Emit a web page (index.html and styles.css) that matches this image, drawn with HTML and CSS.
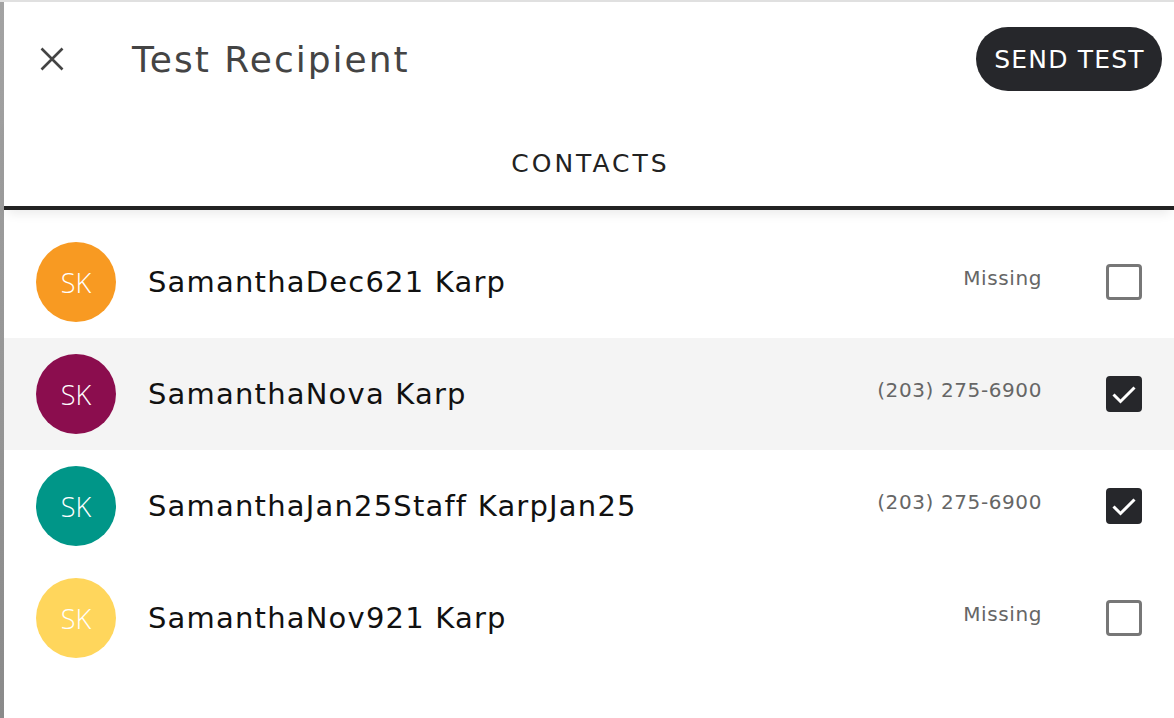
FILE: index.html
```html
<!DOCTYPE html>
<html>
<head>
<meta charset="utf-8">
<link rel="stylesheet" href="styles.css">
</head>
<body>
<div class="dialog">
  <header class="header">
    <button class="close" aria-label="Close">
      <svg width="28" height="28" viewBox="0 0 28 28"><path d="M3.5 3.5 L24.5 24.5 M24.5 3.5 L3.5 24.5" stroke="#444" stroke-width="2.6"/></svg>
    </button>
    <h1 class="title">Test Recipient</h1>
    <button class="send">SEND TEST</button>
  </header>
  <nav class="tabs">
    <div class="tab">CONTACTS</div>
  </nav>
  <ul class="list">
    <li class="row">
      <span class="avatar orange">SK</span>
      <span class="name">SamanthaDec621 Karp</span>
      <span class="meta">Missing</span>
      <span class="check"></span>
    </li>
    <li class="row hover">
      <span class="avatar plum">SK</span>
      <span class="name">SamanthaNova Karp</span>
      <span class="meta">(203) 275-6900</span>
      <span class="check on"><svg width="30" height="30" viewBox="0 0 30 30"><path d="M4.5 15.5 L11.5 22.5 L25.5 8.5" fill="none" stroke="#fff" stroke-width="3"/></svg></span>
    </li>
    <li class="row">
      <span class="avatar teal">SK</span>
      <span class="name">SamanthaJan25Staff KarpJan25</span>
      <span class="meta">(203) 275-6900</span>
      <span class="check on"><svg width="30" height="30" viewBox="0 0 30 30"><path d="M4.5 15.5 L11.5 22.5 L25.5 8.5" fill="none" stroke="#fff" stroke-width="3"/></svg></span>
    </li>
    <li class="row">
      <span class="avatar yellow">SK</span>
      <span class="name">SamanthaNov921 Karp</span>
      <span class="meta">Missing</span>
      <span class="check"></span>
    </li>
  </ul>
</div>
</body>
</html>
```
FILE: styles.css
```css
* { box-sizing: border-box; }
html, body { margin: 0; height: 100%; }
body {
  background: linear-gradient(#a3a3a3, #8a8a8a);
  border-top: 2px solid #e0e0e0;
  font-family: "DejaVu Sans", "Noto Sans", sans-serif;
  overflow: hidden;
}
.dialog {
  margin-left: 4px;
  height: 100%;
  background: #fff;
}
.header {
  height: 114px;
  display: flex;
  align-items: center;
  padding: 0 12px 0 24px;
}
.close {
  width: 48px; height: 48px;
  border: 0; background: none; padding: 0;
  display: flex; align-items: center; justify-content: center;
}
.title {
  flex: 1;
  margin: 0 0 0 56px;
  font-size: 36px;
  letter-spacing: 2px;
  font-weight: 400;
  color: #444;
}
.send {
  height: 64px;
  width: 186px;
  border: 0;
  border-radius: 32px;
  background: #26272b;
  color: #fff;
  font-family: inherit;
  font-size: 25px;
  letter-spacing: 1.2px;
  padding: 0 0 0 1px;
}
.tabs {
  height: 94px;
  border-bottom: 4px solid #222;
  display: flex;
  justify-content: center;
  align-items: center;
  box-shadow: 0 8px 10px -4px rgba(0,0,0,0.08);
}
.tab {
  font-size: 25px;
  letter-spacing: 3px;
  color: #222;
  padding: 4px 0 0 3px;
}
.list { list-style: none; margin: 16px 0 0; padding: 0; }
.row {
  height: 112px;
  display: flex;
  align-items: center;
  padding: 0 32px 0 32px;
}
.row.hover { background: #f4f4f4; }
.avatar {
  width: 80px; height: 80px;
  border-radius: 50%;
  display: flex; align-items: center; justify-content: center;
  color: #fff;
  font-family: "Open Sans", "DejaVu Sans", sans-serif;
  font-weight: 300;
  font-size: 27px;
}
.orange { background: #f89a22; }
.plum { background: #8b0d4e; }
.teal { background: #009688; }
.yellow { background: #ffd65c; }
.name {
  flex: 1;
  margin-left: 32px;
  font-size: 29px;
  letter-spacing: 1.2px;
  color: #111;
}
.meta {
  font-size: 20px;
  letter-spacing: 0.6px;
  color: #666;
  margin-bottom: 8px;
}
.check {
  width: 36px; height: 36px;
  margin-left: 64px;
  border: 3px solid #777;
  border-radius: 4px;
  display: flex; align-items: center; justify-content: center;
}
.check.on { background: #26272b; border-color: #26272b; }
```
